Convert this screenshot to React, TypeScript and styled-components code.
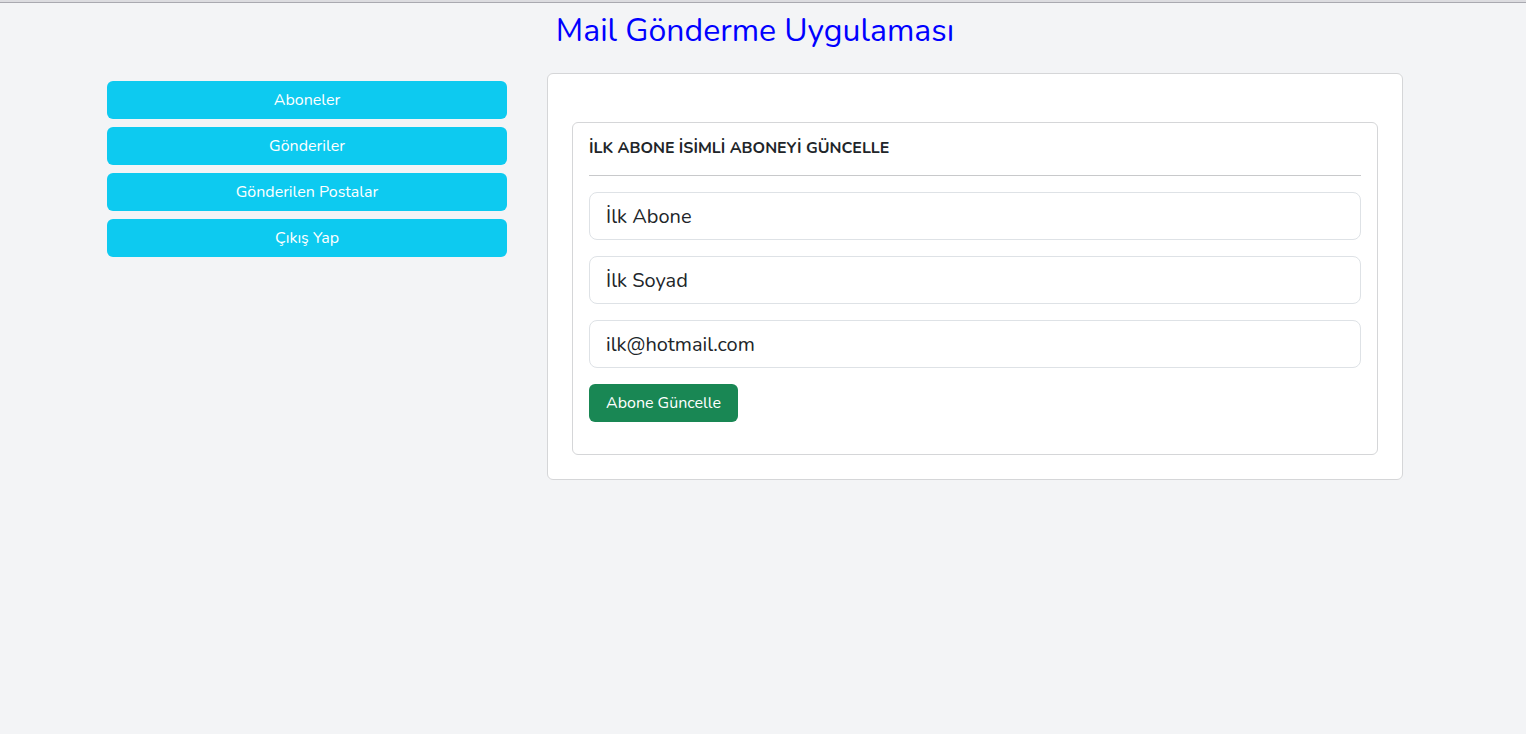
import React from "react";
import styled, { createGlobalStyle } from "styled-components";

const Global = createGlobalStyle`
  html, body { margin: 0; padding: 0; }
  body {
    background: #f3f4f6;
    font-family: "Nunito", Lato, "Noto Sans", sans-serif;
    color: #212529;
  }
  * { box-sizing: border-box; }
`;

const TopBar = styled.div`
  height: 3px;
  background: #dcdce0;
  border-bottom: 1px solid #a9a9b0;
`;

const Container = styled.div`
  width: 1296px;
  margin-left: 107px;
`;

const Title = styled.h1`
  margin: 0;
  padding-top: 9px;
  height: 70px;
  text-align: center;
  font-weight: 400;
  font-size: 32px;
  line-height: 38px;
  color: #0000ff;
`;

const Row = styled.div`
  display: flex;
  gap: 40px;
  align-items: flex-start;
`;

const Side = styled.nav`
  width: 400px;
  display: flex;
  flex-direction: column;
  gap: 8px;
  padding-top: 8px;
`;

const NavButton = styled.button`
  height: 38px;
  border: none;
  border-radius: 6px;
  background: #0dcaf0;
  color: #fff;
  font-family: inherit;
  font-size: 16px;
  cursor: pointer;
`;

const Card = styled.div`
  flex: 1;
  background: #fff;
  border: 1px solid #d5d6d8;
  border-radius: 6px;
  padding: 48px 24px 24px;
`;

const InnerCard = styled.form`
  border: 1px solid #d5d6d8;
  border-radius: 6px;
  padding: 16px;
  display: flex;
  flex-direction: column;
`;

const Heading = styled.h5`
  margin: 0;
  font-size: 16px;
  font-weight: 700;
  line-height: 19px;
  color: #212529;
`;

const Rule = styled.hr`
  width: 100%;
  margin: 17px 0 16px;
  border: none;
  border-top: 1px solid #c8c9cb;
`;

const Input = styled.input`
  height: 48px;
  margin-bottom: 16px;
  border: 1px solid #dee2e6;
  border-radius: 8px;
  padding: 0 16px;
  font-family: inherit;
  font-size: 20px;
  color: #212529;
  background: #fff;
  outline: none;
`;

const SubmitButton = styled.button`
  align-self: flex-start;
  height: 38px;
  padding: 0 17px;
  border: none;
  border-radius: 6px;
  background: #198754;
  color: #fff;
  font-family: inherit;
  font-size: 16px;
  margin-bottom: 16px;
  cursor: pointer;
`;

export default function App() {
  return (
    <>
      <Global />
      <TopBar />
      <Container>
        <Title>Mail Gönderme Uygulaması</Title>
        <Row>
          <Side>
            <NavButton>Aboneler</NavButton>
            <NavButton>Gönderiler</NavButton>
            <NavButton>Gönderilen Postalar</NavButton>
            <NavButton>Çıkış Yap</NavButton>
          </Side>
          <Card>
            <InnerCard onSubmit={(e) => e.preventDefault()}>
              <Heading>İLK ABONE İSİMLİ ABONEYİ GÜNCELLE</Heading>
              <Rule />
              <Input defaultValue="İlk Abone" />
              <Input defaultValue="İlk Soyad" />
              <Input defaultValue="ilk@hotmail.com" />
              <SubmitButton type="submit">Abone Güncelle</SubmitButton>
            </InnerCard>
          </Card>
        </Row>
      </Container>
    </>
  );
}
